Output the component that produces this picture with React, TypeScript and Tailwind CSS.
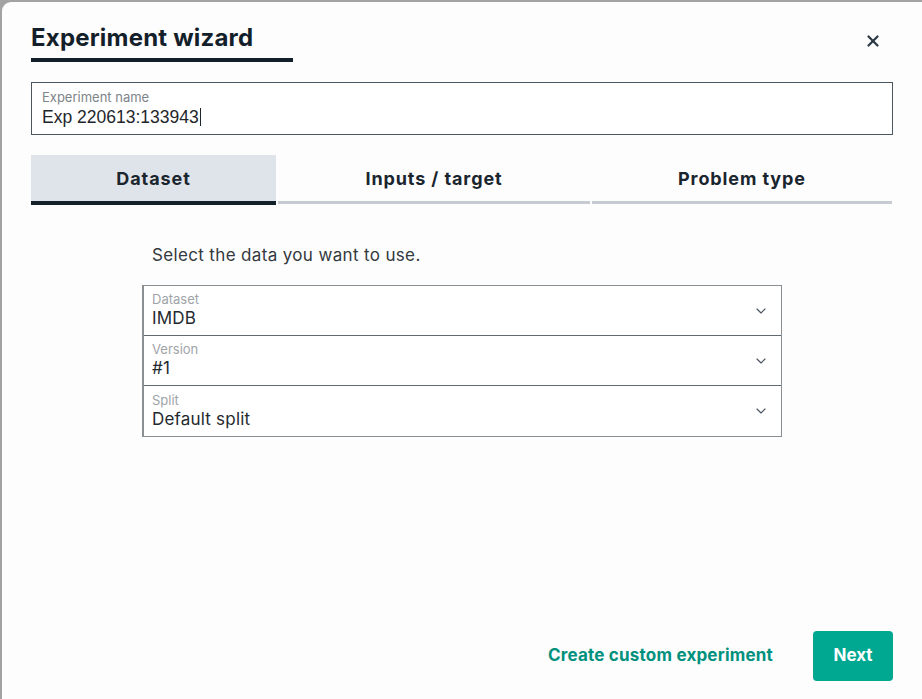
import { ChevronDown, X } from "lucide-react";

const font = { fontFamily: "Inter, 'Noto Sans', sans-serif" };

function SelectRow({ label, value, last }: { label: string; value: string; last?: boolean }) {
  return (
    <div
      className={`flex h-[50px] items-center justify-between bg-white pl-[8px] pr-[12px] ${
        last ? "" : "border-b border-[#5f6a73]"
      }`}
    >
      <div className="flex flex-col">
        <span className="text-[13px] leading-[15px] text-[#a0a4a8]">{label}</span>
        <span className="text-[17px] leading-[22px] tracking-[0.2px] text-[#23292e]">{value}</span>
      </div>
      <ChevronDown size={16} strokeWidth={1.75} className="text-[#4b5660]" />
    </div>
  );
}

export default function App() {
  const tabs = [
    { label: "Dataset", w: "w-[245px]", active: true },
    { label: "Inputs / target", w: "w-[312px]" },
    { label: "Problem type", w: "w-[300px]" },
  ];

  return (
    <div className="h-[699px] w-[922px] overflow-hidden bg-[#a3a3a3] pl-[2px] pt-[2px]" style={font}>
      <div className="flex h-[710px] w-[930px] flex-col rounded-[9px] bg-[#fdfdfd] pl-[29px] pr-[39px]">
        <div className="flex items-start justify-between pt-[20px]">
          <div className="flex flex-col">
            <h1 className="text-[24px] font-bold leading-[32px] tracking-[0.2px] text-[#13202a]">
              Experiment wizard
            </h1>
            <div className="mt-[4px] h-[4px] w-[262px] bg-[#13202a]" />
          </div>
          <button className="mr-[11px] mt-[10px] text-[#2d3a45]">
            <X size={18} strokeWidth={3} />
          </button>
        </div>

        <div className="mt-[20px] flex h-[53px] flex-col justify-center border border-[#4a5660] bg-white pl-[10px]">
          <span className="text-[13px] leading-[15px] text-[#7d848a]">Experiment name</span>
          <span
            className="text-[17.5px] leading-[21px] text-[#1f262b]"
            style={{ fontFamily: "'Liberation Sans', Arial, sans-serif" }}
          >
            Exp 220613:133943<span className="ml-[1px] inline-block h-[18px] w-px translate-y-[3px] bg-[#1f262b]" />
          </span>
        </div>

        <div className="mt-[20px] flex gap-[2px]">
          {tabs.map((t) => (
            <div
              key={t.label}
              className={`flex h-[50px] ${t.w} flex-col ${t.active ? "bg-[#dfe3ea]" : ""}`}
            >
              <div className="flex flex-1 items-center justify-center text-[18px] font-bold tracking-[0.9px] text-[#1a252e]">
                {t.label}
              </div>
              {t.active ? (
                <div className="h-[4px] bg-[#13202a]" />
              ) : (
                <div className="mb-[1px] h-[3px] bg-[#c5cbd1]" />
              )}
            </div>
          ))}
        </div>

        <div className="ml-[111px] mt-[38px] w-[640px]">
          <p className="pl-[10px] text-[17px] leading-[24px] tracking-[0.35px] text-[#33393e]">
            Select the data you want to use.
          </p>
          <div className="mt-[18px] border border-l-2 border-[#8a8f94]">
            <SelectRow label="Dataset" value="IMDB" />
            <SelectRow label="Version" value="#1" />
            <SelectRow label="Split" value="Default split" last />
          </div>
        </div>

        <div className="mt-auto mb-[31px] flex items-center justify-end gap-[40px]">
          <button className="text-[17px] font-bold tracking-[0.2px] text-[#00917e]">
            Create custom experiment
          </button>
          <button className="h-[50px] w-[80px] rounded-[4px] bg-[#00a891] text-[17px] font-bold text-white">
            Next
          </button>
        </div>
      </div>
    </div>
  );
}
